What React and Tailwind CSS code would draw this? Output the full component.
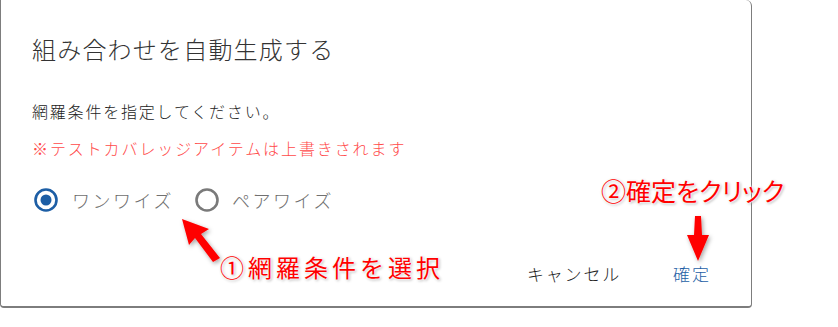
import React from "react";

const jp = { fontFamily: '"Noto Sans CJK JP", "Noto Sans", sans-serif' };

function Radio({ checked }) {
  return (
    <svg width="26" height="26" viewBox="0 0 26 26" className="shrink-0">
      <circle cx="13" cy="13" r="10.5" fill="none" stroke={checked ? "#1d5ea5" : "#7a7a7a"} strokeWidth="2.6" />
      {checked && <circle cx="13" cy="13" r="5.5" fill="#1d5ea5" />}
    </svg>
  );
}

function Arrows() {
  return (
    <svg width="838" height="327" className="absolute left-0 top-0 pointer-events-none" viewBox="0 0 838 327">
      <defs>
        <filter id="sh" x="-50%" y="-50%" width="200%" height="200%">
          <feDropShadow dx="1.5" dy="2" stdDeviation="2" floodColor="#000" floodOpacity="0.35" />
        </filter>
      </defs>
      <polygon
        filter="url(#sh)"
        fill="#ff0000"
        points="182,219 209,229 201,234 220,258 213,262 195,238 189,245"
      />
      <polygon
        filter="url(#sh)"
        fill="#ff0000"
        points="695,216 701,216 702,235 709,235 698,261 687,235 694,235"
      />
    </svg>
  );
}

const glow =
  "[text-shadow:0_0_2px_#fff,0_0_3px_#fff,0_0_3px_#fff,1px_1px_3px_rgba(0,0,0,0.45)]";

export default function App() {
  return (
    <div className="relative w-[838px] h-[327px] bg-white overflow-hidden" style={jp}>
      <div className="w-[752px] h-[308px] bg-white border-l border-r border-b-2 border-[#7d7d7d] rounded-b-[4px] rounded-tr-[6px] flex flex-col">
        <div className="h-[98px] flex items-center pl-[31px] pb-[1px]">
          <span className="text-[24px] font-light text-[#333] tracking-[1.2px] leading-none">組み合わせを自動生成する</span>
        </div>
        <div className="h-[26px] flex items-center pl-[31px]">
          <span className="text-[16px] font-light text-[#222] tracking-[1.8px] leading-none">網羅条件を指定してください。</span>
        </div>
        <div className="h-[48px] flex items-center pl-[31px]">
          <span className="text-[16px] font-light text-[#ff4a4a] tracking-[1.9px] leading-none">※テストカバレッジアイテムは上書きされます</span>
        </div>
        <div className="h-[56px] flex items-center pl-[32px]">
          <label className="flex items-center gap-[13px]">
            <Radio checked />
            <span className="text-[18px] font-light text-[#707070] tracking-[2.5px] leading-none">ワンワイズ</span>
          </label>
          <label className="flex items-center gap-[12px] ml-[20px]">
            <Radio />
            <span className="text-[18px] font-light text-[#707070] tracking-[2.5px] leading-none">ペアワイズ</span>
          </label>
        </div>
        <div className="flex-1 flex items-end justify-end pr-[40px] pb-[15px] gap-[52px]">
          <button className="h-[36px] flex items-center text-[17px] font-light text-[#222] tracking-[1.8px] leading-none">キャンセル</button>
          <button className="h-[36px] flex items-center text-[17px] font-light text-[#1d5ea5] tracking-[2px] leading-none">確定</button>
        </div>
      </div>

      <Arrows />

      <div className={`absolute left-[220px] top-[255px] text-[24px] font-normal text-[#ff0000] tracking-[4px] leading-none ${glow}`}>
        ①網羅条件を選択
      </div>
      <div className={`absolute left-[601px] top-[178px] text-[25px] font-normal text-[#ff0000] leading-none [font-feature-settings:'palt'] ${glow}`}>
        ②確定をクリック
      </div>
    </div>
  );
}
